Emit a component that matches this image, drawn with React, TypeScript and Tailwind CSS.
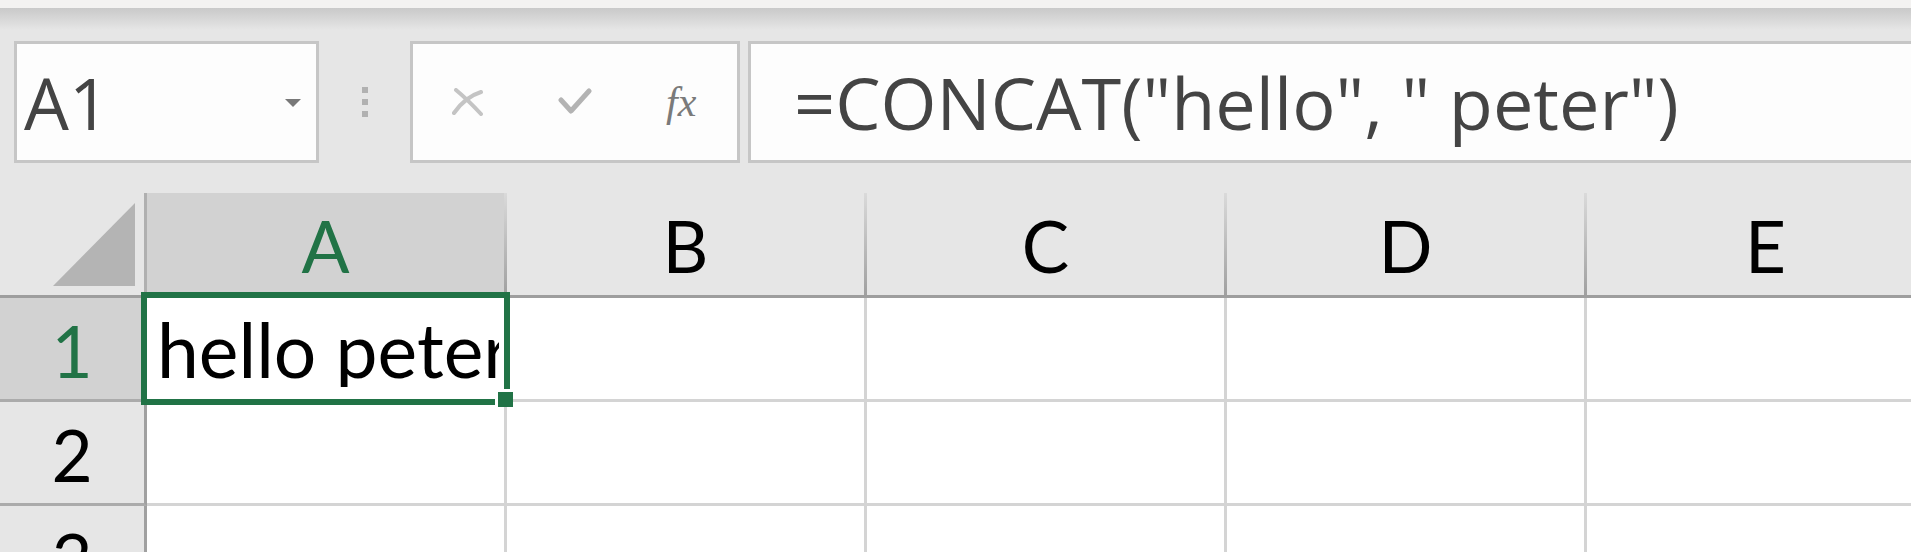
import clsx from 'clsx';

const COLUMNS = ['A', 'B', 'C', 'D', 'E'];
const ROWS = [1, 2, 3];

function NameBox() {
  return (
    <div className="flex h-[122px] w-[305px] shrink-0 items-center border-[3px] border-[#c6c6c6] bg-[#fdfdfd] pl-[7px] pr-[15px]">
      <span className="flex-1 font-['Open_Sans',sans-serif] text-[71px] leading-none text-[#444444]">A1</span>
      <svg width="16" height="8" viewBox="0 0 16 8" className="mb-[-1px]">
        <polygon points="0,0 16,0 8,8" fill="#787878" />
      </svg>
    </div>
  );
}

function FormulaButtons() {
  return (
    <div className="flex h-[122px] w-[330px] shrink-0 items-center border-[3px] border-[#c6c6c6] bg-[#fdfdfd] pl-[39px]">
      {/* cancel */}
      <svg width="31" height="28" viewBox="0 0 31 28" className="mb-[1px]">
        <path d="M4 2 Q15 11 29 26" stroke="#c4c4c4" strokeWidth="4" fill="none" strokeLinecap="round" />
        <path d="M2 25 Q13 9 29 4" stroke="#c4c4c4" strokeWidth="4" fill="none" strokeLinecap="round" />
      </svg>
      {/* enter */}
      <svg width="34" height="28" viewBox="0 0 34 28" className="ml-[75px] mb-[2px]">
        <path d="M3 13 L13 24 L31 4" stroke="#b3b3b3" strokeWidth="5" fill="none" strokeLinecap="round" strokeLinejoin="round" />
      </svg>
      <span className="ml-[74px] font-['Liberation_Serif',serif] text-[42px] italic leading-none text-[#7a7a7a]">fx</span>
    </div>
  );
}

export default function App() {
  return (
    <div className="h-[552px] w-[1911px] overflow-hidden bg-[#e6e6e6]">
      <div className="h-[8px] bg-[#f3f2f1]" />
      <div className="h-[22px] bg-gradient-to-b from-[#c9c9c9] to-[#e6e6e6]" />

      {/* formula bar */}
      <div className="mt-[11px] flex h-[122px] pl-[14px]">
        <NameBox />
        <div className="flex w-[91px] shrink-0 flex-col items-center justify-center gap-[6px]">
          <span className="h-[6px] w-[6px] bg-[#b1b1b1]" />
          <span className="h-[6px] w-[6px] bg-[#b1b1b1]" />
          <span className="h-[6px] w-[6px] bg-[#b1b1b1]" />
        </div>
        <FormulaButtons />
        <div className="ml-[8px] flex h-[122px] w-[1200px] shrink-0 items-center border-[3px] border-[#c6c6c6] bg-[#fdfdfd] pl-[43px]">
          <span className="whitespace-nowrap font-['Open_Sans',sans-serif] text-[72px] leading-none text-[#444444]">
            =CONCAT("hello", " peter")
          </span>
        </div>
      </div>

      {/* sheet */}
      <div className="relative mt-[30px] font-['Lato',sans-serif] text-[71px] leading-none">
        <div className="flex h-[105px] border-b-[3px] border-[#9e9e9e]">
          <div className="flex w-[147px] shrink-0 items-end justify-end border-r-[3px] border-[#b0b0b0] pb-[9px] pr-[9px]">
            <svg width="82" height="83" viewBox="0 0 82 83">
              <polygon points="0,83 82,83 82,0" fill="#b4b4b4" />
            </svg>
          </div>
          {COLUMNS.map((c) => (
            <div key={c} className="flex shrink-0">
              <div
                className={clsx(
                  'flex w-[357px] justify-center pt-[17px]',
                  c === 'A' ? 'bg-[#d2d2d2] text-[#217346]' : 'text-black',
                )}
              >
                {c}
              </div>
              <div className="w-[3px] bg-gradient-to-b from-[#dadada] to-[#a0a0a0]" />
            </div>
          ))}
        </div>

        {ROWS.map((r) => (
          <div key={r} className="flex h-[104px]">
            <div
              className={clsx(
                'flex w-[147px] shrink-0 justify-center border-r-[3px] border-b-[3px] border-r-[#a0a0a0] border-b-[#ababab] pt-[17px]',
                r === 1 ? 'bg-[#d2d2d2] text-[#217346]' : 'text-black',
              )}
            >
              {r}
            </div>
            {COLUMNS.map((c) => (
              <div key={c} className="w-[360px] shrink-0 border-r-[3px] border-b-[3px] border-[#d4d4d4] bg-white">
                {r === 1 && c === 'A' && (
                  <div className="w-[352px] overflow-hidden whitespace-nowrap pl-[10px] pt-[14px] text-[75px] text-black">
                    hello peter
                  </div>
                )}
              </div>
            ))}
          </div>
        ))}

        {/* active cell */}
        <div className="absolute left-[141px] top-[99px] h-[113px] w-[369px] border-[6px] border-[#217346]" />
        <div className="absolute left-[495px] top-[196px] h-[18px] w-[18px] border-l-[3px] border-t-[3px] border-white bg-[#217346]" />
      </div>
    </div>
  );
}
